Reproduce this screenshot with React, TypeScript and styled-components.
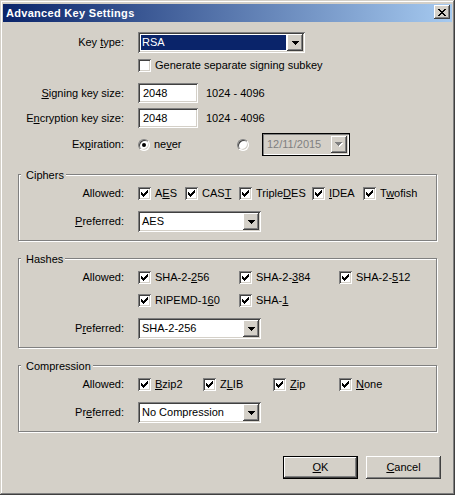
import React from 'react';
import styled, { createGlobalStyle } from 'styled-components';

const FACE = '#d4d0c8';

const GlobalStyle = createGlobalStyle`
  html, body {
    margin: 0;
    padding: 0;
    background: ${FACE};
  }
  body {
    font-family: "Liberation Sans", Arial, sans-serif;
    font-size: 11px;
    line-height: 13px;
    color: #000;
  }
`;

const raised = `
  box-shadow: inset -1px -1px #404040, inset 1px 1px #fff, inset -2px -2px #808080, inset 2px 2px ${FACE};
`;

const sunken = `
  box-shadow: inset 1px 1px #808080, inset -1px -1px #fff, inset 2px 2px #404040, inset -2px -2px ${FACE};
`;

const Window = styled.div`
  width: 455px;
  height: 495px;
  box-sizing: border-box;
  padding: 4px 3px 3px 3px;
  background: ${FACE};
  box-shadow: inset -1px -1px #404040, inset 1px 1px ${FACE}, inset -2px -2px #808080, inset 2px 2px #fff;
  display: flex;
  flex-direction: column;
`;

const TitleBar = styled.div`
  height: 18px;
  display: flex;
  align-items: center;
  justify-content: space-between;
  padding: 0 2px 0 3px;
  background: linear-gradient(to right, #0a246a, #a6caf0);
  color: #fff;
  font-weight: bold;
  letter-spacing: 0.3px;
`;

const CloseButton = styled.div`
  width: 16px;
  height: 14px;
  align-self: flex-start;
  margin-top: 1px;
  background: ${FACE};
  ${raised}
  display: flex;
  align-items: center;
  justify-content: center;
`;

const Body = styled.div`
  flex: 1;
  display: flex;
  flex-direction: column;
  padding-top: 10px;
`;

const Row = styled.div<{ $h: number; $mt?: number }>`
  display: flex;
  align-items: center;
  height: ${p => p.$h}px;
  margin-top: ${p => p.$mt ?? 0}px;
`;

const Label = styled.label<{ $w: number }>`
  width: ${p => p.$w}px;
  flex-shrink: 0;
  margin-right: 14px;
  text-align: right;
  white-space: nowrap;
`;

const Combo = styled.div<{ $w: number }>`
  width: ${p => p.$w}px;
  height: 21px;
  box-sizing: border-box;
  padding: 2px;
  background: #fff;
  ${sunken}
  display: flex;
`;

const ComboText = styled.div<{ $selected?: boolean }>`
  flex: 1;
  margin: 1px;
  padding-left: 1px;
  display: flex;
  align-items: center;
  white-space: nowrap;
  background: ${p => (p.$selected ? '#0a246a' : 'transparent')};
  color: ${p => (p.$selected ? '#fff' : '#000')};
`;

const DropButton = styled.div`
  width: 16px;
  height: 17px;
  flex-shrink: 0;
  background: ${FACE};
  ${raised}
  display: flex;
  align-items: center;
  justify-content: center;
`;

const Edit = styled.div`
  width: 60px;
  height: 20px;
  box-sizing: border-box;
  padding-left: 5px;
  background: #fff;
  ${sunken}
  display: flex;
  align-items: center;
`;

const Hint = styled.span`
  margin-left: 8px;
`;

const CheckItem = styled.label<{ $w?: number }>`
  display: flex;
  align-items: center;
  gap: 4px;
  flex-shrink: 0;
  white-space: nowrap;
  width: ${p => (p.$w ? `${p.$w}px` : 'auto')};
`;

const Box = styled.span`
  width: 13px;
  height: 13px;
  box-sizing: border-box;
  flex-shrink: 0;
  background: #fff;
  ${sunken}
  display: flex;
  align-items: center;
  justify-content: center;
`;

const RadioCircle = styled.span<{ $gap: number }>`
  width: 12px;
  height: 12px;
  box-sizing: border-box;
  flex-shrink: 0;
  border-radius: 50%;
  border: 1px solid;
  border-color: #808080 #fff #fff #808080;
  background: #fff;
  box-shadow: inset 1px 1px #404040, inset -1px -1px ${FACE};
  display: flex;
  align-items: center;
  justify-content: center;
  margin-right: ${p => p.$gap}px;
`;

const Dot = styled.span`
  width: 4px;
  height: 4px;
  border-radius: 50%;
  background: #000;
`;

const DateBox = styled.div`
  width: 88px;
  height: 23px;
  box-sizing: border-box;
  border: 1px solid #000;
  padding: 2px;
  background: ${FACE};
  box-shadow: inset 1px 1px #808080, inset -1px -1px #fff;
  display: flex;
`;

const DateText = styled.div`
  flex: 1;
  padding-left: 2px;
  display: flex;
  align-items: center;
  color: #808080;
`;

const Group = styled.div<{ $mt: number }>`
  position: relative;
  width: 419px;
  box-sizing: border-box;
  margin: ${p => p.$mt}px 0 0 15px;
  padding: 12px 0 8px 0;
  border: 1px solid #808080;
  box-shadow: inset 1px 1px #fff, 1px 1px #fff;
`;

const Caption = styled.span`
  position: absolute;
  top: -6px;
  left: 2px;
  padding: 0 2px 0 5px;
  background: ${FACE};
`;

const ButtonRow = styled.div`
  display: flex;
  justify-content: flex-end;
  gap: 8px;
  margin-top: 24px;
  padding-right: 11px;
`;

const Button = styled.button<{ $default?: boolean }>`
  width: 75px;
  height: 23px;
  box-sizing: border-box;
  padding: 0;
  font: inherit;
  color: #000;
  background: ${FACE};
  border: ${p => (p.$default ? '1px solid #000' : 'none')};
  ${raised}
`;

const Arrow = () => (
  <svg width="7" height="4" viewBox="0 0 7 4" shapeRendering="crispEdges">
    <path d="M0 0h7v1H0zM1 1h5v1H1zM2 2h3v1H2zM3 3h1v1H3z" fill="#000" />
  </svg>
);

const DisabledArrow = () => (
  <svg width="8" height="5" viewBox="0 0 8 5" shapeRendering="crispEdges">
    <path d="M1 1h7v1H1zM2 2h5v1H2zM3 3h3v1H3zM4 4h1v1H4z" fill="#fff" />
    <path d="M0 0h7v1H0zM1 1h5v1H1zM2 2h3v1H2zM3 3h1v1H3z" fill="#808080" />
  </svg>
);

const CheckMark = () => (
  <svg width="7" height="7" viewBox="0 0 7 7" shapeRendering="crispEdges">
    <path
      d="M6 0h1v1H6zM5 1h2v1H5zM0 2h1v1H0zM4 2h3v1H4zM0 3h2v1H0zM3 3h3v1H3zM0 4h5v1H0zM1 5h3v1H1zM2 6h1v1H2z"
      fill="#000"
    />
  </svg>
);

const CloseGlyph = () => (
  <svg width="8" height="7" viewBox="0 0 8 7" shapeRendering="crispEdges">
    <path
      d="M0 0h2v1H0zM6 0h2v1H6zM1 1h2v1H1zM5 1h2v1H5zM2 2h4v1H2zM3 3h2v1H3zM2 4h4v1H2zM1 5h2v1H1zM5 5h2v1H5zM0 6h2v1H0zM6 6h2v1H6z"
      fill="#000"
    />
  </svg>
);

// label text with one underlined access key (at < 0: none)
const Key = ({ text, at }: { text: string; at: number }) =>
  at < 0 ? (
    <>{text}</>
  ) : (
    <>
      {text.slice(0, at)}
      <u>{text[at]}</u>
      {text.slice(at + 1)}
    </>
  );

const Check = ({ text, at, checked = true, w }: { text: string; at: number; checked?: boolean; w?: number }) => (
  <CheckItem $w={w}>
    <Box>{checked && <CheckMark />}</Box>
    <span>
      <Key text={text} at={at} />
    </span>
  </CheckItem>
);

const Dropdown = ({ value, w, selected }: { value: string; w: number; selected?: boolean }) => (
  <Combo $w={w}>
    <ComboText $selected={selected}>{value}</ComboText>
    <DropButton>
      <Arrow />
    </DropButton>
  </Combo>
);

const ciphers = [
  { text: 'AES', at: 1, w: 47 },
  { text: 'CAST', at: 3, w: 54 },
  { text: 'TripleDES', at: 6, w: 73 },
  { text: 'IDEA', at: 0, w: 51 },
  { text: 'Twofish', at: 1 },
];

const hashesTop = [
  { text: 'SHA-2-256', at: 6, w: 101 },
  { text: 'SHA-2-384', at: 6, w: 100 },
  { text: 'SHA-2-512', at: 6 },
];

const hashesBottom = [
  { text: 'RIPEMD-160', at: 8, w: 101 },
  { text: 'SHA-1', at: 4 },
];

const compression = [
  { text: 'Bzip2', at: 0, w: 65 },
  { text: 'ZLIB', at: 1, w: 70 },
  { text: 'Zip', at: 0, w: 66 },
  { text: 'None', at: 0 },
];

const TL = 121;
const GL = 105;

export default function App() {
  return (
    <>
      <GlobalStyle />
      <Window>
        <TitleBar>
          <span>Advanced Key Settings</span>
          <CloseButton>
            <CloseGlyph />
          </CloseButton>
        </TitleBar>
        <Body>
          <Row $h={21}>
            <Label $w={TL}>
              <Key text="Key type:" at={4} />
            </Label>
            <Dropdown value="RSA" w={167} selected />
          </Row>
          <Row $h={13} $mt={6}>
            <Label $w={TL} />
            <Check text="Generate separate signing subkey" at={-1} checked={false} />
          </Row>
          <Row $h={20} $mt={11}>
            <Label $w={TL}>
              <Key text="Signing key size:" at={0} />
            </Label>
            <Edit>2048</Edit>
            <Hint>1024 - 4096</Hint>
          </Row>
          <Row $h={20} $mt={5}>
            <Label $w={TL}>
              <Key text="Encryption key size:" at={1} />
            </Label>
            <Edit>2048</Edit>
            <Hint>1024 - 4096</Hint>
          </Row>
          <Row $h={23} $mt={5}>
            <Label $w={TL}>
              <Key text="Expiration:" at={2} />
            </Label>
            <CheckItem $w={99}>
              <RadioCircle $gap={0}>
                <Dot />
              </RadioCircle>
              <span>
                <Key text="never" at={2} />
              </span>
            </CheckItem>
            <RadioCircle $gap={13} />
            <DateBox>
              <DateText>12/11/2015</DateText>
              <DropButton>
                <DisabledArrow />
              </DropButton>
            </DateBox>
          </Row>

          <Group $mt={18}>
            <Caption>Ciphers</Caption>
            <Row $h={13}>
              <Label $w={GL}>Allowed:</Label>
              {ciphers.map(c => (
                <Check key={c.text} {...c} />
              ))}
            </Row>
            <Row $h={21} $mt={11}>
              <Label $w={GL}>
                <Key text="Preferred:" at={0} />
              </Label>
              <Dropdown value="AES" w={123} />
            </Row>
          </Group>

          <Group $mt={17}>
            <Caption>Hashes</Caption>
            <Row $h={13}>
              <Label $w={GL}>Allowed:</Label>
              {hashesTop.map(c => (
                <Check key={c.text} {...c} />
              ))}
            </Row>
            <Row $h={13} $mt={10}>
              <Label $w={GL} />
              {hashesBottom.map(c => (
                <Check key={c.text} {...c} />
              ))}
            </Row>
            <Row $h={21} $mt={11}>
              <Label $w={GL}>
                <Key text="Preferred:" at={1} />
              </Label>
              <Dropdown value="SHA-2-256" w={123} />
            </Row>
          </Group>

          <Group $mt={17}>
            <Caption>Compression</Caption>
            <Row $h={13}>
              <Label $w={GL}>Allowed:</Label>
              {compression.map(c => (
                <Check key={c.text} {...c} />
              ))}
            </Row>
            <Row $h={21} $mt={11}>
              <Label $w={GL}>
                <Key text="Preferred:" at={2} />
              </Label>
              <Dropdown value="No Compression" w={123} />
            </Row>
          </Group>

          <ButtonRow>
            <Button $default>
              <Key text="OK" at={0} />
            </Button>
            <Button>
              <Key text="Cancel" at={0} />
            </Button>
          </ButtonRow>
        </Body>
      </Window>
    </>
  );
}
